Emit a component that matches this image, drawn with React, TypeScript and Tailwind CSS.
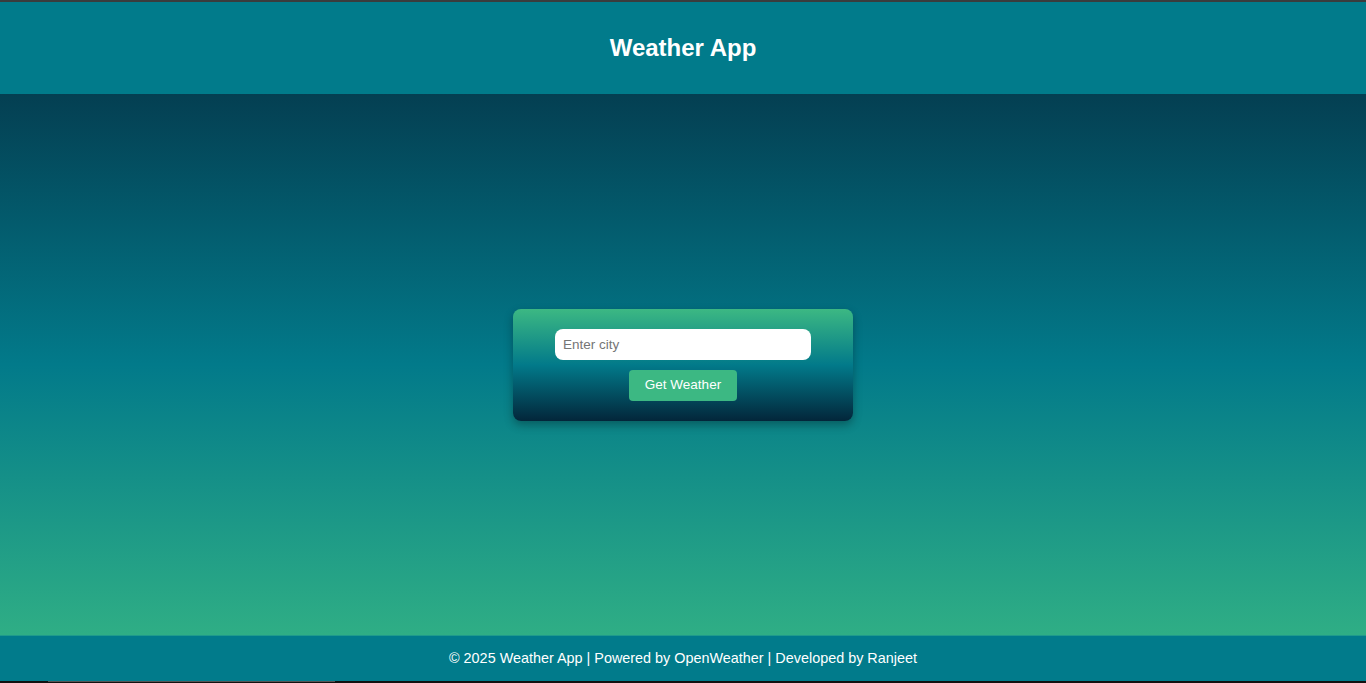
export default function App() {
  return (
    <div className="flex h-[683px] flex-col bg-[#111] font-['Liberation_Sans',Arial,sans-serif]">
      <div className="h-[2px] bg-[#3a3c3d]" />
      <header className="flex h-[92px] shrink-0 items-center justify-center bg-[#017b8b]">
        <h1 className="text-[24px] font-bold text-white">Weather App</h1>
      </header>
      <main className="flex flex-1 items-center justify-center bg-[linear-gradient(to_bottom,#043f52,#027a8a_50%,#2fae85)]">
        <div className="flex w-[340px] flex-col items-center gap-[10px] rounded-lg bg-[linear-gradient(to_bottom,#3cb883,#027a8a_50%,#03263a)] pt-[20px] pb-[20px] shadow-[0_4px_10px_rgba(0,0,0,0.3)]">
          <input
            placeholder="Enter city"
            className="h-[31px] w-[256px] rounded-lg bg-white px-[8px] text-[13.5px] text-[#222] outline-none placeholder:text-[#757575]"
          />
          <button className="h-[31px] w-[108px] rounded bg-[#3cb883] text-[13.5px] font-medium text-white">Get Weather</button>
        </div>
      </main>
      <footer className="flex h-[46px] shrink-0 items-center justify-center border-t border-[#1f9a8c] bg-[#017b8b]">
        <p className="text-[14.4px] text-white">© 2025 Weather App | Powered by OpenWeather | Developed by Ranjeet</p>
      </footer>
      <div className="flex h-[2px] bg-[#111]">
        <div className="ml-[48px] h-[1px] w-[287px] bg-[#555]" />
      </div>
    </div>
  );
}
